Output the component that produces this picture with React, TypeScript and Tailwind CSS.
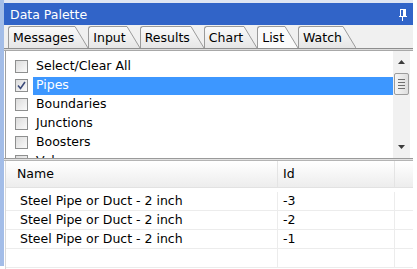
import React from 'react';

const tabs = ['Messages', 'Input', 'Results', 'Chart', 'List', 'Watch'];

const items = [
  { label: 'Select/Clear All', checked: false },
  { label: 'Pipes', checked: true },
  { label: 'Boundaries', checked: false },
  { label: 'Junctions', checked: false },
  { label: 'Boosters', checked: false },
  { label: 'Valves', checked: false },
];

const rows = [
  { name: 'Steel Pipe or Duct - 2 inch', id: '-3' },
  { name: 'Steel Pipe or Duct - 2 inch', id: '-2' },
  { name: 'Steel Pipe or Duct - 2 inch', id: '-1' },
];

const Tab: React.FC<{ label: string; active?: boolean }> = ({ label, active }) => {
  const fill = active ? '#fbfbfb' : '#eeeeee';
  return (
    <div className="flex h-[22px] items-stretch">
      <div
        className={`flex items-center pl-[4px] pr-[1px] pt-[1px] border-l border-t border-[#9a9a9a] rounded-tl-[3px] ${
          active ? 'bg-[#fbfbfb]' : 'bg-gradient-to-b from-[#fafafa] to-[#e6e6e6]'
        }`}
      >
        {label}
      </div>
      <svg width="13" height="22" className="block">
        <defs>
          <linearGradient id={`g-${label}`} x1="0" y1="0" x2="0" y2="1">
            <stop offset="0" stopColor={active ? '#fbfbfb' : '#fafafa'} />
            <stop offset="1" stopColor={active ? '#fbfbfb' : '#e6e6e6'} />
          </linearGradient>
        </defs>
        <path d="M0 0.5 L13 22 L0 22 Z" fill={active ? fill : `url(#g-${label})`} />
        <path d="M0 0.5 L13 22" stroke="#9a9a9a" strokeWidth="1" fill="none" />
      </svg>
    </div>
  );
};

const Checkbox: React.FC<{ checked: boolean }> = ({ checked }) => (
  <div className="w-[13px] h-[13px] border border-[#8e8f8f] bg-gradient-to-br from-[#dcdcdc] to-[#fafafa] flex items-center justify-center shrink-0">
    {checked && (
      <svg width="9" height="9" viewBox="0 0 9 9">
        <path d="M1 4.5 L3.5 7.5 L8 1" stroke="#3c4b7a" strokeWidth="1.6" fill="none" />
      </svg>
    )}
  </div>
);

export default function App() {
  return (
    <div className="w-[417px] h-[269px] bg-white text-[12.5px] text-black leading-none font-['DejaVu_Sans',_Verdana,_sans-serif] overflow-hidden">
      <div className="flex w-[413px] h-[269px]">
        <div className="w-[4px] h-[266px] bg-[#a3bde8]" />
        <div className="flex-1 flex flex-col overflow-hidden">
          <div className="h-[3px] shrink-0 bg-[#dfe6f3]" />
          {/* title bar */}
          <div className="h-[22px] shrink-0 bg-[#3164c8] text-white flex items-center pt-[2px] pl-[6px] pr-[6px]">
            <span className="flex-1">Data Palette</span>
            <svg width="8" height="12" viewBox="0 0 8 12">
              <rect x="1.5" y="0.5" width="5" height="7" fill="none" stroke="#ffffff" />
              <rect x="4" y="1" width="2" height="6" fill="#ffffff" />
              <rect x="0" y="7" width="8" height="1" fill="#ffffff" />
              <rect x="3" y="8" width="1" height="4" fill="#ffffff" />
            </svg>
          </div>
          {/* tab strip */}
          <div className="h-[23px] shrink-0 bg-[#f0f0f0] flex items-end pl-[4px]">
            {tabs.map((t) => (
              <Tab key={t} label={t} active={t === 'List'} />
            ))}
          </div>
          <div className="h-[3px] shrink-0 border-t border-[#8e8e8e] bg-[#dcdcdc] border-b border-b-[#a8a8a8]" />
          {/* checked list */}
          <div className="h-[107px] shrink-0 flex border-l border-[#a0a0a0] ml-[1px] overflow-hidden">
            <div className="flex-1 flex flex-col pt-[6px] pl-[9px] overflow-hidden">
              {items.map((it) => (
                <div key={it.label} className="h-[19px] flex items-center shrink-0">
                  <Checkbox checked={it.checked} />
                  <div
                    className={`ml-[5px] h-[18px] flex items-center pl-[3px] flex-1 ${
                      it.checked ? 'bg-[#3d97ff] text-white' : ''
                    }`}
                  >
                    {it.label}
                  </div>
                </div>
              ))}
            </div>
            {/* scrollbar */}
            <div className="w-[17px] mr-[3px] bg-[#f1f1f1] flex flex-col items-center">
              <div className="h-[22px] flex items-center justify-center">
                <svg width="7" height="4" viewBox="0 0 7 4">
                  <path d="M0 4 L3.5 0 L7 4 Z" fill="#3c3c3c" />
                </svg>
              </div>
              <div className="w-[15px] h-[22px] border border-[#9c9c9c] rounded-[2px] bg-gradient-to-r from-[#f6f6f6] to-[#dedede] flex flex-col items-center justify-center gap-[2px]">
                <div className="w-[7px] h-[1px] bg-[#707070]" />
                <div className="w-[7px] h-[1px] bg-[#707070]" />
                <div className="w-[7px] h-[1px] bg-[#707070]" />
                <div className="w-[7px] h-[1px] bg-[#707070]" />
              </div>
              <div className="flex-1" />
              <div className="h-[22px] flex items-center justify-center">
                <svg width="7" height="4" viewBox="0 0 7 4">
                  <path d="M0 0 L3.5 4 L7 0 Z" fill="#3c3c3c" />
                </svg>
              </div>
            </div>
          </div>
          {/* splitter */}
          <div className="h-[3px] shrink-0 border-t border-[#9a9a9a] bg-[#e2e2e2] border-b border-b-[#b4b4b4]" />
          {/* grid */}
          <div className="flex-1 flex flex-col border-l border-[#d8d8d8] ml-[1px] overflow-hidden">
            <div className="h-[27px] shrink-0 flex bg-gradient-to-b from-[#ffffff] to-[#ededed] border-b border-[#e2e2e2]">
              <div className="w-[272px] flex items-center pl-[11px] border-r border-[#e4e4e4]">Name</div>
              <div className="w-[117px] flex items-center pl-[5px] border-r border-[#e4e4e4]">Id</div>
              <div className="flex-1" />
            </div>
            <div className="h-[4px] shrink-0" />
            {[...rows, { name: '', id: '' }].map((r, i) => (
              <div key={i} className="h-[19px] shrink-0 flex border-b border-[#ececec]">
                <div className="w-[272px] flex items-center pl-[14px] border-r border-[#ececec]">{r.name}</div>
                <div className="w-[117px] flex items-center pl-[5px] border-r border-[#ececec]">{r.id}</div>
                <div className="flex-1" />
              </div>
            ))}
          </div>
        </div>
      </div>
    </div>
  );
}
